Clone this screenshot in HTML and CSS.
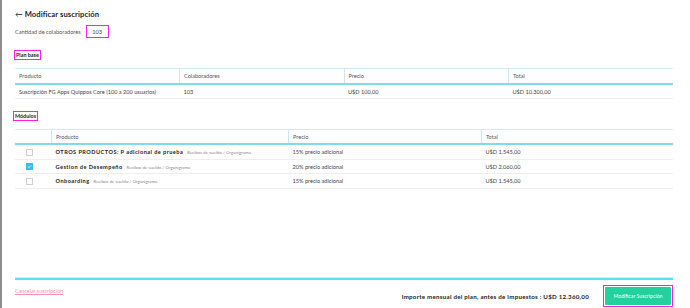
FILE: index.html
```html
<!DOCTYPE html>
<html lang="es">
<head>
    <meta charset="UTF-8">
    <meta name="viewport" content="width=device-width, initial-scale=1.0">
    <title>Modificar suscripción</title>
    <link rel="stylesheet" href="styles.css">
</head>
<body>
    <div class="page">
        <div class="content">
            <h1 class="title"><span class="back">&larr;</span> Modificar suscripción</h1>

            <div class="qty">
                <span>Cantidad de colaboradores</span>
                <span class="qty-input">103</span>
            </div>

            <div class="section-label">Plan base</div>
            <div class="table-wrap">
                <table class="grid plan">
                    <thead>
                        <tr>
                            <th>Producto</th>
                            <th>Colaboradores</th>
                            <th>Precio</th>
                            <th>Total</th>
                        </tr>
                    </thead>
                    <tbody>
                        <tr>
                            <td>Suscripción FG Apps Quippos Core (100 a 200 usuarios)</td>
                            <td>103</td>
                            <td>U$D 100,00</td>
                            <td>U$D 10.300,00</td>
                        </tr>
                    </tbody>
                </table>
            </div>

            <div class="section-label modules-label">Módulos</div>
            <div class="table-wrap">
                <table class="grid modules">
                    <thead>
                        <tr>
                            <th class="col-check"></th>
                            <th class="col-product">Producto</th>
                            <th class="col-price">Precio</th>
                            <th>Total</th>
                        </tr>
                    </thead>
                    <tbody>
                        <tr>
                            <td class="col-check"><span class="checkbox"></span></td>
                            <td><span class="mod-name">OTROS PRODUCTOS: P adicional de prueba</span><span class="mod-sub">Recibos de sueldo / Organigrama</span></td>
                            <td>15% precio adicional</td>
                            <td>U$D 1.545,00</td>
                        </tr>
                        <tr>
                            <td class="col-check"><span class="checkbox checked"><svg viewBox="0 0 10 10" width="5" height="5"><path d="M2 5.2 L4.2 7.3 L8 3" fill="none" stroke="#fff" stroke-width="1.4"/></svg></span></td>
                            <td><span class="mod-name">Gestion de Desempeño</span><span class="mod-sub">Recibos de sueldo / Organigrama</span></td>
                            <td>20% precio adicional</td>
                            <td>U$D 2.060,00</td>
                        </tr>
                        <tr>
                            <td class="col-check"><span class="checkbox"></span></td>
                            <td><span class="mod-name">Onboarding</span><span class="mod-sub">Recibos de sueldo / Organigrama</span></td>
                            <td>15% precio adicional</td>
                            <td>U$D 1.545,00</td>
                        </tr>
                    </tbody>
                </table>
            </div>
        </div>

        <div class="footer">
            <div class="footer-line"></div>
            <div class="footer-row">
                <a class="cancel" href="#">Cancelar suscripción</a>
                <div class="footer-right">
                    <span class="amount">Importe mensual del plan, antes de impuestos : U$D 12.360,00</span>
                    <div class="btn-outline">
                        <button class="btn">Modificar Suscripción</button>
                    </div>
                </div>
            </div>
        </div>
    </div>
</body>
</html>
```

FILE: styles.css
```css
html, body {
    margin: 0;
    padding: 0;
    height: 100%;
}

body {
    font-family: 'Lato', 'Open Sans', sans-serif;
    color: #333;
    background: #ffffff;
}

.page {
    height: 100vh;
    box-sizing: border-box;
    border-left: 2px solid #8c8c8c;
    padding: 0 17px 0 13px;
    display: flex;
    flex-direction: column;
}

.content {
    flex: 1;
}

.title {
    margin: 9px 0 0 0;
    font-size: 7.6px;
    font-weight: 700;
    letter-spacing: 0.1px;
    color: #222;
    line-height: 10px;
}

.back {
    font-weight: 400;
}

.qty {
    display: flex;
    align-items: center;
    gap: 5px;
    margin-top: 6px;
    font-size: 5.6px;
    color: #555;
}

.qty-input {
    width: 21px;
    height: 11px;
    border: 1px solid #ff1ee6;
    display: flex;
    align-items: center;
    justify-content: center;
    color: #444;
}

.section-label {
    display: inline-block;
    margin-top: 12px;
    margin-left: -1px;
    padding: 1px 1px 0 1px;
    border: 1px solid #ff1ee6;
    font-size: 5.4px;
    font-weight: 700;
    line-height: 7px;
    color: #222;
}

.modules-label {
    margin-top: 12px;
    margin-left: -2px;
}

.table-wrap {
    margin-top: 8px;
}

.grid {
    width: 100%;
    border-collapse: collapse;
    table-layout: fixed;
    font-size: 5.6px;
    color: #444;
}

.grid th {
    text-align: left;
    font-weight: 400;
    color: #555;
    height: 13.5px;
    padding: 0 4px;
    border-top: 1px solid #d6eaf3;
    border-left: 1px solid #cfe5ef;
    border-bottom: 2px solid #7fd9f2;
}

.grid th:first-child {
    border-left: none;
}

.grid td {
    height: 13px;
    padding: 0 4px;
    border-bottom: 1px solid #eeeeee;
}

.modules td {
    height: 13.5px;
}

.modules .col-check {
    width: 21px;
    padding-left: 11px;
    text-align: left;
}

.modules .col-product {
    width: 228px;
}

.modules .col-price {
    width: 184px;
}

.checkbox {
    display: inline-flex;
    align-items: center;
    justify-content: center;
    width: 5px;
    height: 5px;
    border: 1px solid #d0d0d0;
    vertical-align: middle;
}

.checkbox.checked {
    background: #36c0f0;
    border-color: #36c0f0;
}

.mod-name {
    font-weight: 700;
    letter-spacing: 0.45px;
    color: #222;
    margin-right: 4px;
}

.mod-sub {
    font-size: 4.4px;
    color: #888;
}

.footer {
    padding-bottom: 1px;
}

.footer-line {
    height: 2px;
    background: #55e3f2;
    border-top: 1px solid #c8f4f9;
}

.footer-row {
    display: flex;
    justify-content: space-between;
    align-items: flex-start;
    margin-top: 5px;
}

.cancel {
    margin-top: 3px;
    font-size: 5.4px;
    color: #f48fb1;
    text-decoration: underline;
}

.footer-right {
    display: flex;
    align-items: center;
    gap: 14px;
}

.amount {
    font-size: 6.2px;
    font-weight: 700;
    letter-spacing: 0.25px;
    color: #222;
}

.btn-outline {
    border: 1px solid #ff1ee6;
    padding: 1px;
}

.btn {
    display: block;
    width: 66px;
    height: 18px;
    border: none;
    border-radius: 1px;
    background: #22d19b;
    color: #ffffff;
    font-family: 'Lato', 'Open Sans', sans-serif;
    font-size: 5.2px;
    padding: 0;
}
```
